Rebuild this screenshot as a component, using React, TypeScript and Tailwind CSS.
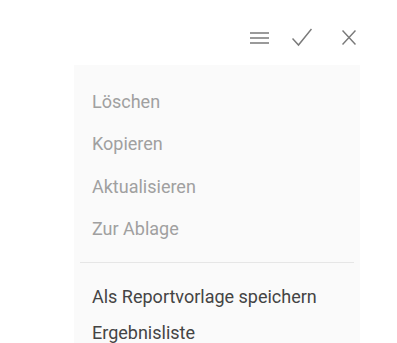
import React from 'react';

const grayItems = ['Löschen', 'Kopieren', 'Aktualisieren', 'Zur Ablage'];
const darkItems = ['Als Reportvorlage speichern', 'Ergebnisliste'];

export default function App() {
  return (
    <div className="w-[397px] h-[343px] bg-white overflow-hidden" style={{ fontFamily: 'Roboto, "Noto Sans", sans-serif' }}>
      {/* Toolbar */}
      <div className="h-[65px] pt-[10px] flex items-center justify-end pr-[41px] text-[#7a7a7a]">
        <svg width="19" height="12" viewBox="0 0 19 12" fill="none" stroke="currentColor" strokeWidth="1.5">
          <path d="M0 1h19M0 6h19M0 11h19" />
        </svg>
        <svg className="ml-[23px]" width="20" height="19" viewBox="0 0 20 19" fill="none" stroke="currentColor" strokeWidth="1.5">
          <path d="M0.5 10.5l6 6.5L19.5 1" />
        </svg>
        <svg className="ml-[30px]" width="14" height="15" viewBox="0 0 14 15" fill="none" stroke="currentColor" strokeWidth="1.5">
          <path d="M0.5 0.5l13 14M13.5 0.5l-13 14" />
        </svg>
      </div>

      {/* Menu panel */}
      <div className="ml-[74px] w-[286px] bg-[#fafafa] pt-[15px] pb-4">
        <ul>
          {grayItems.map((item) => (
            <li key={item} className="h-[42.5px] flex items-center pl-[18px] text-[18px] text-[#a0a0a0]">
              {item}
            </li>
          ))}
        </ul>
        <div className="mx-[6px] mt-[12px] border-t border-[#e6e6e6]" />
        <ul className="pt-[15px]">
          {darkItems.map((item) => (
            <li key={item} className="h-[36px] flex items-center pl-[18px] text-[18px] text-[#444444]">
              {item}
            </li>
          ))}
        </ul>
      </div>
    </div>
  );
}
